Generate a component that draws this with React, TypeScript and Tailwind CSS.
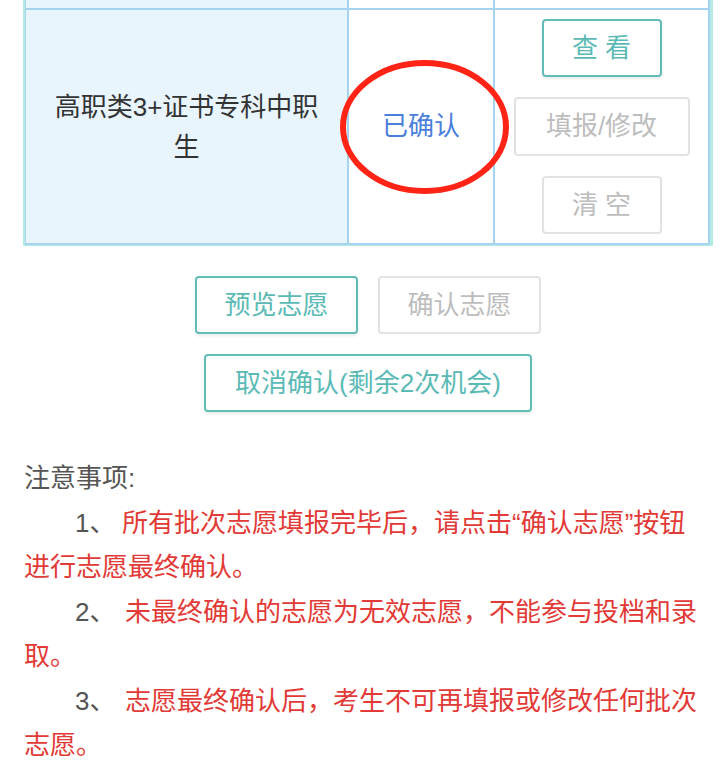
import React from "react";

const tealBtn =
  "flex items-center justify-center rounded-[4px] border-2 border-[#62bcb7] text-[#5bbab5] text-[26px] bg-white shadow-[0_2px_3px_rgba(0,0,0,0.08)]";
const grayBtn =
  "flex items-center justify-center rounded-[4px] border-2 border-[#e2e2e2] text-[#bdbdbd] text-[26px] bg-white";

export default function App() {
  return (
    <div className="relative w-[720px] h-[778px] overflow-hidden bg-white font-['Liberation_Sans','Noto_Sans_CJK_SC',sans-serif]">
      {/* table */}
      <div className="ml-[23px] w-[690px] border-l-2 border-r-[3px] border-b border-[#b6ebe5]">
        <div className="flex h-[10px]">
          <div className="w-[324px] bg-[#e8f5fd] border-l border-r-2 border-b-2 border-[#a6d3ef]" />
          <div className="w-[146px] bg-white border-r-2 border-b-2 border-[#a6d3ef]" />
          <div className="flex-1 bg-white border-r-2 border-b-2 border-[#a6d3ef]" />
        </div>
        <div className="flex h-[235px]">
          <div className="w-[324px] bg-[#e8f5fd] border-l border-r-2 border-b-2 border-[#a6d3ef] flex items-center justify-center px-[20px]">
            <p className="text-[26px] leading-[40px] text-[#333] text-center">
              高职类3+证书专科中职生
            </p>
          </div>
          <div className="w-[146px] bg-white border-r-2 border-b-2 border-[#a6d3ef] flex items-center justify-center">
            <span className="text-[26px] text-[#4a7fdc]">已确认</span>
          </div>
          <div className="flex-1 bg-white border-r-2 border-b-2 border-[#a6d3ef] flex flex-col items-center justify-center gap-[20px]">
            <div className={`${tealBtn} w-[120px] h-[58px]`}>查 看</div>
            <div className={`${grayBtn} w-[176px] h-[59px]`}>填报/修改</div>
            <div className={`${grayBtn} w-[120px] h-[58px]`}>清 空</div>
          </div>
        </div>
      </div>

      {/* action buttons */}
      <div className="ml-[23px] w-[690px] mt-[30px] flex flex-col items-center gap-[20px]">
        <div className="flex gap-[20px]">
          <div className={`${tealBtn} w-[163px] h-[58px]`}>预览志愿</div>
          <div className={`${grayBtn} w-[163px] h-[58px]`}>确认志愿</div>
        </div>
        <div className={`${tealBtn} w-[328px] h-[58px]`}>取消确认(剩余2次机会)</div>
      </div>

      {/* notes */}
      <div className="ml-[24px] w-[676px] mt-[44px] text-[26px] leading-[44.5px]">
        <p className="text-[#555]">注意事项:</p>
        <p className="indent-[51px]">
          <span className="inline-block indent-0 w-[47px] text-[#555]">1、</span>
          <span className="text-[#e23a36]">所有批次志愿填报完毕后，请点击“确认志愿”按钮进行志愿最终确认。</span>
        </p>
        <p className="indent-[51px]">
          <span className="inline-block indent-0 w-[50px] text-[#555]">2、</span>
          <span className="text-[#e23a36]">未最终确认的志愿为无效志愿，不能参与投档和录取。</span>
        </p>
        <p className="indent-[51px]">
          <span className="inline-block indent-0 w-[50px] text-[#555]">3、</span>
          <span className="text-[#e23a36]">志愿最终确认后，考生不可再填报或修改任何批次志愿。</span>
        </p>
      </div>

      {/* red annotation ellipse */}
      <svg
        className="absolute left-[340px] top-[60px] pointer-events-none"
        width="170"
        height="135"
        viewBox="0 0 170 135"
      >
        <ellipse cx="84.5" cy="67" rx="81.5" ry="64" fill="none" stroke="#ff2415" strokeWidth="6" />
      </svg>
    </div>
  );
}
